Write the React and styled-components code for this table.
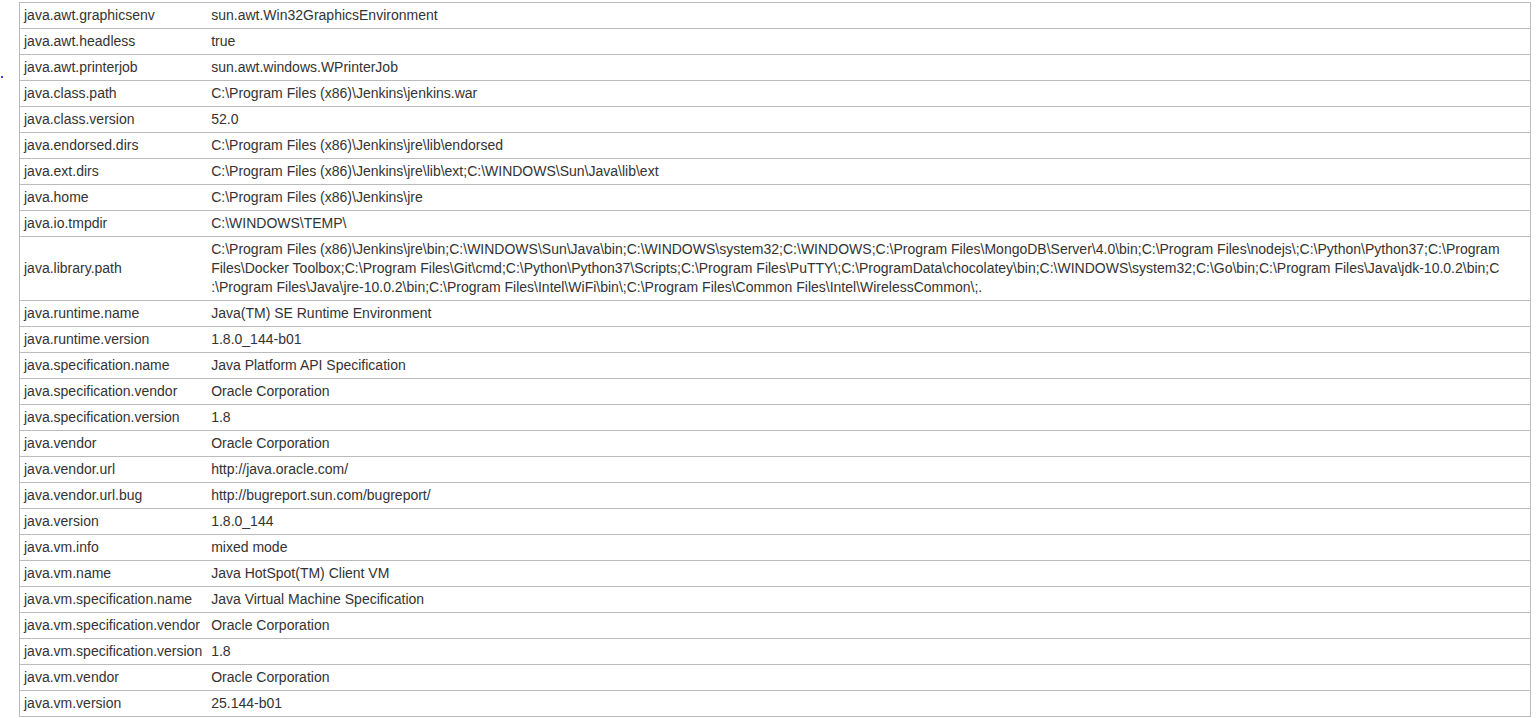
import React from "react";
import styled, { createGlobalStyle } from "styled-components";

const GlobalStyle = createGlobalStyle`
	html, body {
		margin: 0;
		padding: 0;
		background: #fff;
		overflow: hidden;
	}
	body {
		font-family: "Liberation Sans", Arial, sans-serif;
		color: #333;
	}
`;

const props = [
	["java.awt.graphicsenv", "sun.awt.Win32GraphicsEnvironment"],
	["java.awt.headless", "true"],
	["java.awt.printerjob", "sun.awt.windows.WPrinterJob"],
	["java.class.path", "C:\\Program Files (x86)\\Jenkins\\jenkins.war"],
	["java.class.version", "52.0"],
	["java.endorsed.dirs", "C:\\Program Files (x86)\\Jenkins\\jre\\lib\\endorsed"],
	["java.ext.dirs", "C:\\Program Files (x86)\\Jenkins\\jre\\lib\\ext;C:\\WINDOWS\\Sun\\Java\\lib\\ext"],
	["java.home", "C:\\Program Files (x86)\\Jenkins\\jre"],
	["java.io.tmpdir", "C:\\WINDOWS\\TEMP\\"],
	["java.library.path", [
		"C:\\Program Files (x86)\\Jenkins\\jre\\bin;C:\\WINDOWS\\Sun\\Java\\bin;C:\\WINDOWS\\system32;C:\\WINDOWS;C:\\Program Files\\MongoDB\\Server\\4.0\\bin;C:\\Program Files\\nodejs\\;C:\\Python\\Python37;C:\\Program",
		"Files\\Docker Toolbox;C:\\Program Files\\Git\\cmd;C:\\Python\\Python37\\Scripts;C:\\Program Files\\PuTTY\\;C:\\ProgramData\\chocolatey\\bin;C:\\WINDOWS\\system32;C:\\Go\\bin;C:\\Program Files\\Java\\jdk-10.0.2\\bin;C",
		":\\Program Files\\Java\\jre-10.0.2\\bin;C:\\Program Files\\Intel\\WiFi\\bin\\;C:\\Program Files\\Common Files\\Intel\\WirelessCommon\\;.",
	]],
	["java.runtime.name", "Java(TM) SE Runtime Environment"],
	["java.runtime.version", "1.8.0_144-b01"],
	["java.specification.name", "Java Platform API Specification"],
	["java.specification.vendor", "Oracle Corporation"],
	["java.specification.version", "1.8"],
	["java.vendor", "Oracle Corporation"],
	["java.vendor.url", "http://java.oracle.com/"],
	["java.vendor.url.bug", "http://bugreport.sun.com/bugreport/"],
	["java.version", "1.8.0_144"],
	["java.vm.info", "mixed mode"],
	["java.vm.name", "Java HotSpot(TM) Client VM"],
	["java.vm.specification.name", "Java Virtual Machine Specification"],
	["java.vm.specification.vendor", "Oracle Corporation"],
	["java.vm.specification.version", "1.8"],
	["java.vm.vendor", "Oracle Corporation"],
	["java.vm.version", "25.144-b01"],
];

const Page = styled.div`
	position: relative;
	padding: 2px 0 0 19px;
	width: 1512px;
`;

// stray blue speck at the left edge of the screenshot
const Dot = styled.span`
	position: absolute;
	left: 1px;
	top: 76px;
	width: 2px;
	height: 2px;
	background: #3a4bd0;
`;

const Table = styled.table`
	width: 1512px;
	border-collapse: collapse;
	border-left: 1px solid #bbb;
	border-right: 1px solid #bbb;
	font-size: 14px;
	line-height: 19px;
`;

const Row = styled.tr`
	border-top: 1px solid #bbb;
	border-bottom: 1px solid #bbb;
`;

const Key = styled.td`
	padding: 3px 5px 3px 4px;
	white-space: nowrap;
	vertical-align: middle;
	width: 1px;
`;

const Value = styled.td`
	padding: 3px 4px 3px 4px;
	vertical-align: middle;
	white-space: nowrap;
`;

export default function App() {
	return (
		<>
			<GlobalStyle />
			<Page>
				<Dot />
				<Table>
					<tbody>
						{props.map(([k, v]) => (
							<Row key={k}>
								<Key>{k}</Key>
								<Value>
									{Array.isArray(v)
										? v.map((line, i) => <div key={i}>{line}</div>)
										: v}
								</Value>
							</Row>
						))}
					</tbody>
				</Table>
			</Page>
		</>
	);
}
